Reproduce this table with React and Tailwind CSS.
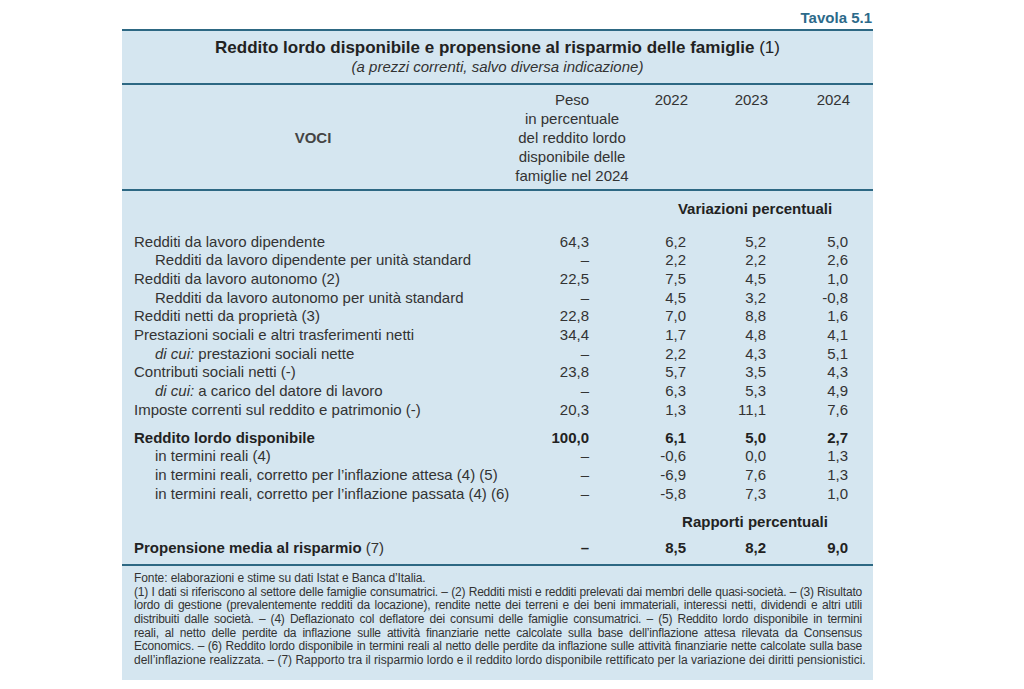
import React from 'react';

const rows = [
  { label: 'Redditi da lavoro dipendente', peso: '64,3', v: ['6,2', '5,2', '5,0'] },
  { label: 'Redditi da lavoro dipendente per unità standard', indent: true, peso: '–', v: ['2,2', '2,2', '2,6'] },
  { label: 'Redditi da lavoro autonomo (2)', peso: '22,5', v: ['7,5', '4,5', '1,0'] },
  { label: 'Redditi da lavoro autonomo per unità standard', indent: true, peso: '–', v: ['4,5', '3,2', '-0,8'] },
  { label: 'Redditi netti da proprietà (3)', peso: '22,8', v: ['7,0', '8,8', '1,6'] },
  { label: 'Prestazioni sociali e altri trasferimenti netti', peso: '34,4', v: ['1,7', '4,8', '4,1'] },
  { label: 'prestazioni sociali nette', prefix: 'di cui:', indent: true, peso: '–', v: ['2,2', '4,3', '5,1'] },
  { label: 'Contributi sociali netti (-)', peso: '23,8', v: ['5,7', '3,5', '4,3'] },
  { label: 'a carico del datore di lavoro', prefix: 'di cui:', indent: true, peso: '–', v: ['6,3', '5,3', '4,9'] },
  { label: 'Imposte correnti sul reddito e patrimonio (-)', peso: '20,3', v: ['1,3', '11,1', '7,6'] },
];

const realRows = [
  { label: 'Reddito lordo disponibile', bold: true, peso: '100,0', v: ['6,1', '5,0', '2,7'] },
  { label: 'in termini reali (4)', indent: true, peso: '–', v: ['-0,6', '0,0', '1,3'] },
  { label: 'in termini reali, corretto per l’inflazione attesa (4) (5)', indent: true, peso: '–', v: ['-6,9', '7,6', '1,3'] },
  { label: 'in termini reali, corretto per l’inflazione passata (4) (6)', indent: true, peso: '–', v: ['-5,8', '7,3', '1,0'] },
];

const notes = [
  '(1) I dati si riferiscono al settore delle famiglie consumatrici. – (2) Redditi misti e redditi prelevati dai membri delle quasi-società. – (3) Risultato',
  'lordo di gestione (prevalentemente redditi da locazione), rendite nette dei terreni e dei beni immateriali, interessi netti, dividendi e altri utili',
  'distribuiti dalle società. – (4) Deflazionato col deflatore dei consumi delle famiglie consumatrici. – (5) Reddito lordo disponibile in termini',
  'reali, al netto delle perdite da inflazione sulle attività finanziarie nette calcolate sulla base dell’inflazione attesa rilevata da Consensus',
  'Economics. – (6) Reddito lordo disponibile in termini reali al netto delle perdite da inflazione sulle attività finanziarie nette calcolate sulla base',
];

// label | peso | 2022 | 2023 | 2024
const GRID = 'grid grid-cols-[382px_136px_48px_80px_82px]';

const Row = ({ row }) => (
  <div className={`${GRID} h-[18.67px] leading-[18.67px] ${row.bold ? 'font-bold text-[#222]' : ''}`}>
    <div className={`whitespace-nowrap ${row.indent ? 'pl-[33px]' : 'pl-[12px]'}`}>
      {row.prefix && <i>{row.prefix} </i>}
      {row.label}
    </div>
    <div className="text-right pr-[51px]">{row.peso}</div>
    {row.v.map((x, i) => (
      <div key={i} className="text-right pr-[2px]">{x}</div>
    ))}
  </div>
);

export default function App() {
  return (
    <div className="w-[1024px] h-[689px] bg-white font-['Liberation_Sans',Arial,sans-serif] text-[#333]">
      {/* Table number */}
      <div className="h-[29px] pt-[9px] pr-[152px] text-right text-[15px] leading-[18px] font-bold text-[#2c6a8a]">
        Tavola 5.1
      </div>

      <div className="ml-[122px] w-[751px] bg-[#d5e6f0] border-t-2 border-[#2d6883]">
        {/* Title */}
        <div className="pt-[7px] pb-[7px] border-b-2 border-[#2d6883] text-center">
          <div className="text-[17px] leading-[19px] text-[#222]">
            <span className="font-bold">Reddito lordo disponibile e propensione al risparmio delle famiglie</span> (1)
          </div>
          <div className="text-[15px] leading-[19px] italic">(a prezzi correnti, salvo diversa indicazione)</div>
        </div>

        {/* Header */}
        <div className={`${GRID} h-[106px] border-b-2 border-[#2d6883] text-[15px] leading-[19px]`}>
          <div className="flex items-center justify-center font-bold text-[#444]">VOCI</div>
          <div className="pt-[4.5px] text-center">
            Peso<br />in percentuale<br />del reddito lordo<br />disponibile delle<br />famiglie nel 2024
          </div>
          <div className="pt-[4.5px] text-right">2022</div>
          <div className="pt-[4.5px] text-right">2023</div>
          <div className="pt-[4.5px] text-right">2024</div>
        </div>

        {/* Body */}
        <div className="pt-[9px] pb-[7px] border-b-2 border-[#2d6883] text-[15px]">
          <div className={`${GRID} h-[18px] leading-[18px]`}>
            <div />
            <div />
            <div className="col-span-3 pl-[20px] text-center font-bold text-[#222] whitespace-nowrap">Variazioni percentuali</div>
          </div>
          <div className="mt-[14.7px]">
            {rows.map((r, i) => <Row key={i} row={r} />)}
          </div>
          <div className="mt-[9.3px]">
            {realRows.map((r, i) => <Row key={i} row={r} />)}
          </div>
          <div className={`${GRID} mt-[9.7px] h-[18px] leading-[18px]`}>
            <div />
            <div />
            <div className="col-span-3 pl-[20px] text-center font-bold text-[#222] whitespace-nowrap">Rapporti percentuali</div>
          </div>
          <div className={`${GRID} mt-[8px] h-[18px] leading-[18px] font-bold text-[#222]`}>
            <div className="pl-[12px] whitespace-nowrap">
              Propensione media al risparmio <span className="font-normal text-[#333]">(7)</span>
            </div>
            <div className="text-right pr-[51px]">–</div>
            <div className="text-right pr-[2px]">8,5</div>
            <div className="text-right pr-[2px]">8,2</div>
            <div className="text-right pr-[2px]">9,0</div>
          </div>
        </div>

        {/* Notes */}
        <div className="pt-[6px] pb-[12px] pl-[12px] pr-[11px] text-[12px] leading-[13.67px] text-[#333]">
          <div className="tracking-[-0.1px]">Fonte: elaborazioni e stime su dati Istat e Banca d’Italia.</div>
          {notes.map((n, i) => (
            <div key={i} className="text-justify [text-align-last:justify] whitespace-nowrap tracking-[-0.2px]">{n}</div>
          ))}
          <div className="whitespace-nowrap">dell’inflazione realizzata. – (7) Rapporto tra il risparmio lordo e il reddito lordo disponibile rettificato per la variazione dei diritti pensionistici.</div>
        </div>
      </div>
    </div>
  );
}
